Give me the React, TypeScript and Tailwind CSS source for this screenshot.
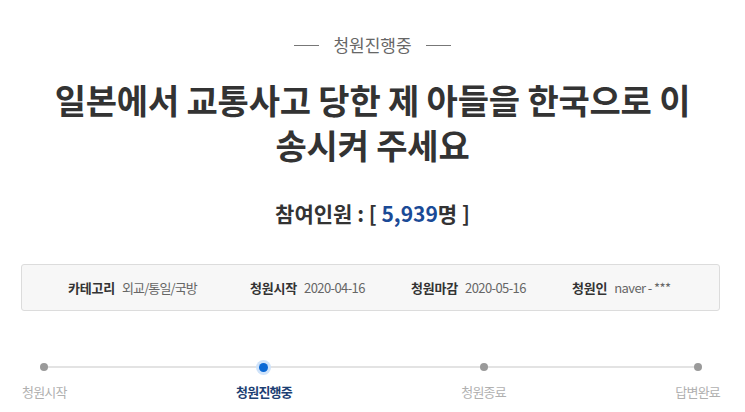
import React from "react";

const font = { fontFamily: '"Noto Sans CJK KR", "Noto Sans", sans-serif' };

function Step({ label, active }: { label: string; active?: boolean }) {
  return (
    <div className="flex flex-col items-center">
      <div className="h-[14px] flex items-center justify-center">
        {active ? (
          <div className="w-[15px] h-[15px] rounded-full bg-[#cfe3fa] flex items-center justify-center">
            <div className="w-[9px] h-[9px] rounded-full bg-[#0a68d4]" />
          </div>
        ) : (
          <div className="w-[8px] h-[8px] rounded-full bg-[#9a9a9a]" />
        )}
      </div>
      <div
        className={
          "mt-[9px] text-[13px] leading-[18px] tracking-[-0.8px] " +
          (active ? "font-bold text-[#1d3f73]" : "text-[#b0b0b0]")
        }
      >
        {label}
      </div>
    </div>
  );
}

export default function App() {
  return (
    <div className="w-[745px] h-[412px] bg-white overflow-hidden" style={font}>
      <div className="flex items-center justify-center gap-[14px] pt-[35px]">
        <div className="w-[25px] h-px bg-[#777]" />
        <div className="text-[17px] leading-[20px] text-[#666]">청원진행중</div>
        <div className="w-[25px] h-px bg-[#777]" />
      </div>
      <h1 className="mt-[22px] text-center text-[34px] leading-[45px] font-bold text-[#333] tracking-[-0.2px]">
        일본에서 교통사고 당한 제 아들을 한국으로 이<br />송시켜 주세요
      </h1>
      <div className="mt-[33px] text-center text-[21px] leading-[26px] font-bold text-[#333]">
        참여인원 : [ <span className="text-[#1a4a96]">5,939</span>명 ]
      </div>
      <div className="ml-[21px] w-[699px] mt-[38px] h-[47px] rounded-[3px] border border-[#dcdcdc] bg-[#f7f7f7] flex items-center pl-[46px] text-[13px]">
        <div className="w-[182px] flex items-center gap-[7px]">
          <span className="font-bold text-[#333] tracking-[-0.2px]">카테고리</span>
          <span className="text-[#666] tracking-[-0.9px]">외교/통일/국방</span>
        </div>
        <div className="w-[161px] flex items-center gap-[7px]">
          <span className="font-bold text-[#333] tracking-[-0.2px]">청원시작</span>
          <span className="text-[#666] tracking-[-0.6px]">2020-04-16</span>
        </div>
        <div className="w-[161px] flex items-center gap-[7px]">
          <span className="font-bold text-[#333] tracking-[-0.2px]">청원마감</span>
          <span className="text-[#666] tracking-[-0.6px]">2020-05-16</span>
        </div>
        <div className="flex items-center gap-[7px]">
          <span className="font-bold text-[#333] tracking-[-0.2px]">청원인</span>
          <span className="text-[#666] tracking-[-0.6px]">naver - ***</span>
        </div>
      </div>
      <div className="relative ml-[22px] w-[698px] mt-[49px] flex justify-between">
        <div className="absolute left-[22px] right-[23px] top-[6px] h-[2px] bg-[#e3e3e3]" />
        <div className="relative"><Step label="청원시작" /></div>
        <div className="relative"><Step label="청원진행중" active /></div>
        <div className="relative"><Step label="청원종료" /></div>
        <div className="relative"><Step label="답변완료" /></div>
      </div>
    </div>
  );
}
